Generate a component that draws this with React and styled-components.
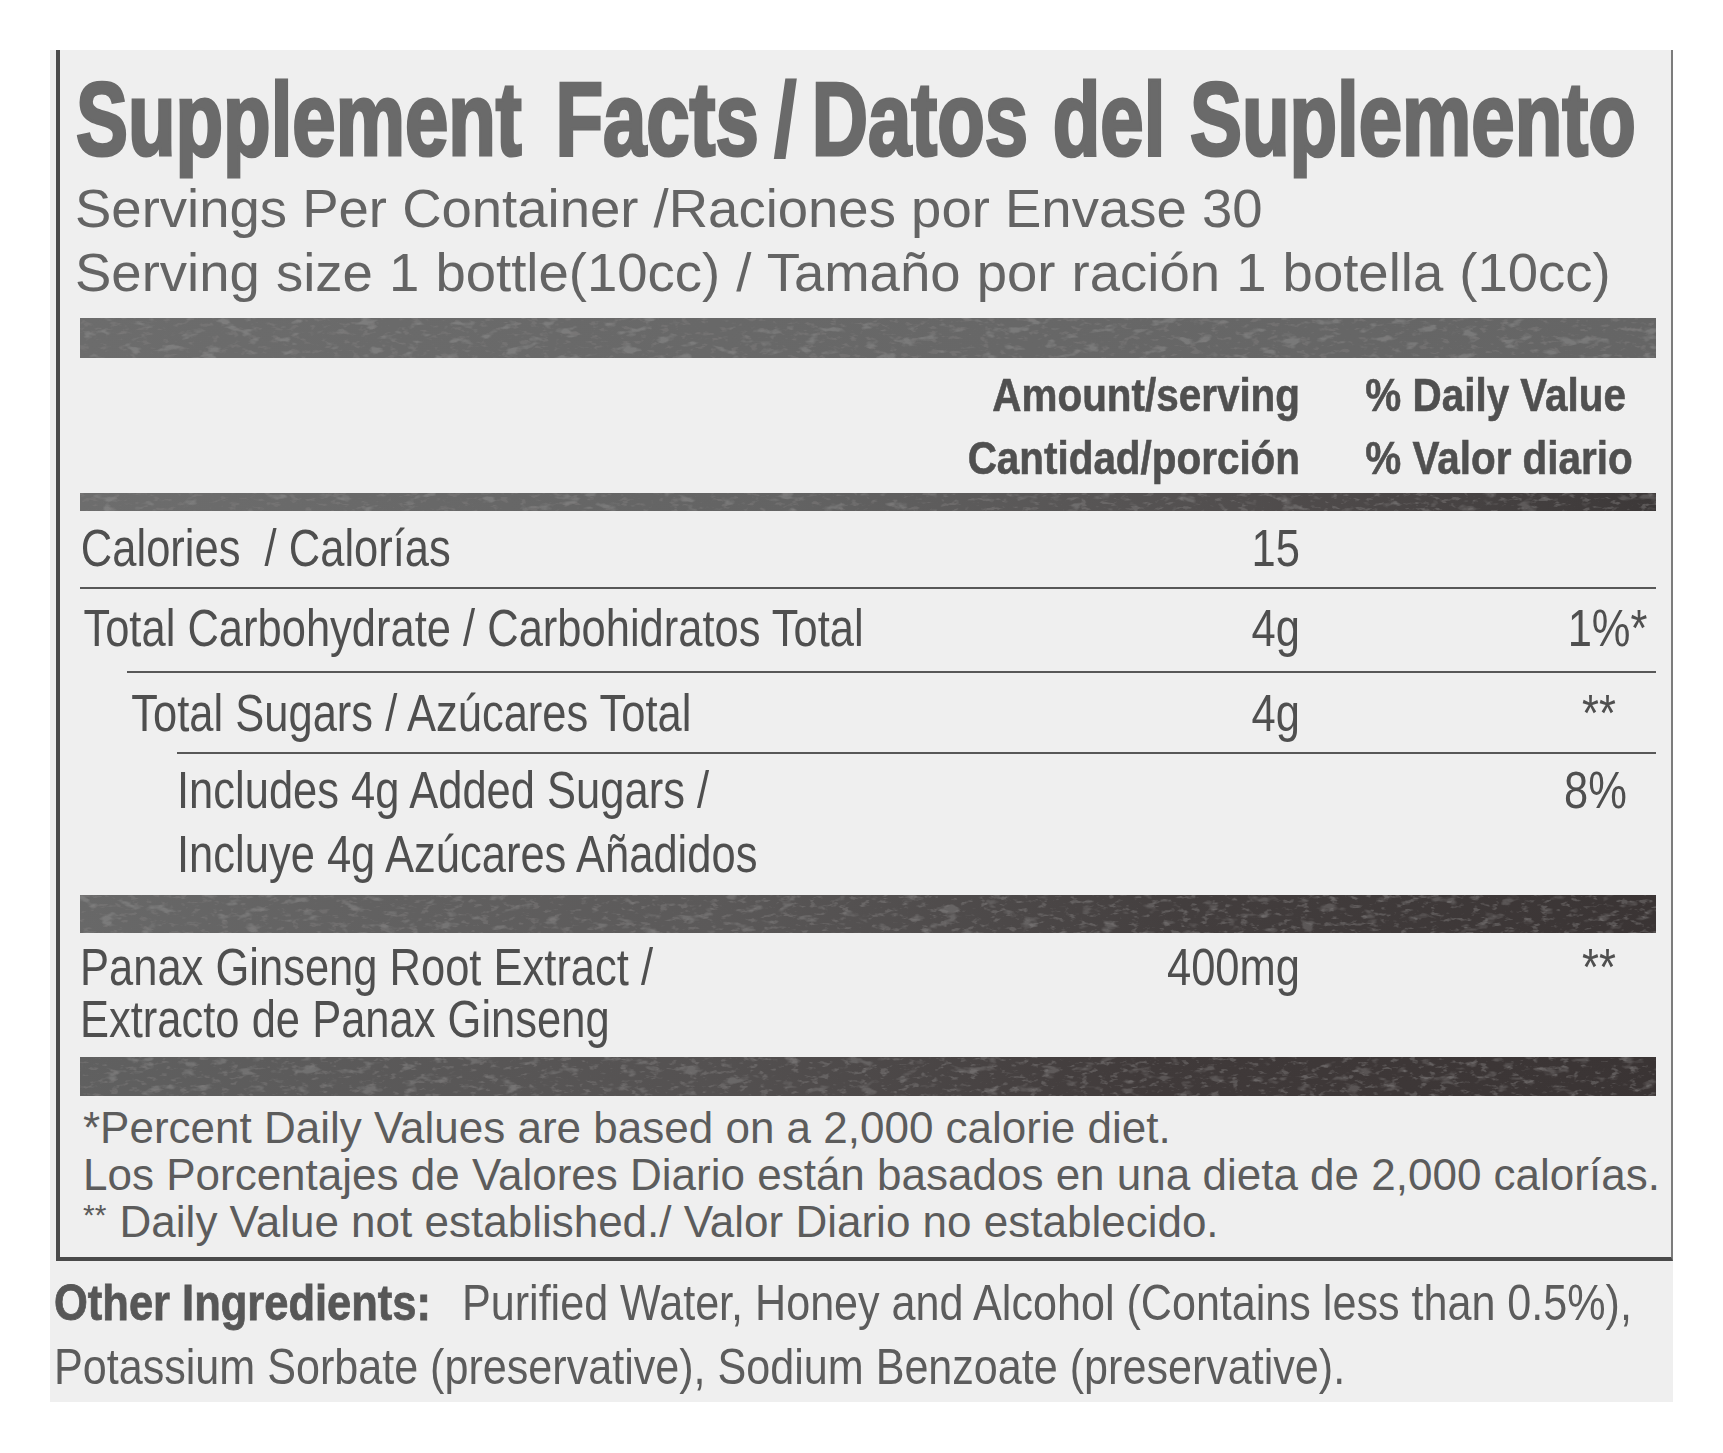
import React, { useId } from "react";
import styled, { createGlobalStyle } from "styled-components";

const GlobalStyle = createGlobalStyle`
  html, body {
    margin: 0;
    padding: 0;
    background: #ffffff;
    overflow: hidden;
  }
  body {
    font-family: "Liberation Sans", Arial, Helvetica, sans-serif;
  }
`;

const Page = styled.div`
  width: 1723px;
  height: 1453px;
  box-sizing: border-box;
  padding: 50px 0 0 50px;
  background: #ffffff;
`;

const Panel = styled.div`
  width: 1623px;
  height: 1352px;
  box-sizing: border-box;
  padding-left: 6px;
  background: #efefef;
  display: flex;
  flex-direction: column;
`;

const FactsBox = styled.section`
  display: flex;
  flex-direction: column;
  border-left: 4px solid #4b4b4b;
  border-right: 2px solid #7c7c7c;
  border-bottom: 4px solid #4a4a4a;
  padding: 17px 15px 12px 20px;
`;

const Title = styled.h1`
  margin: 0 0 6px -4px;
  font-family: "Liberation Sans", Arial, sans-serif;
  font-weight: 700;
  font-size: 104px;
  line-height: 104px;
  color: #6a6a6a;
  -webkit-text-stroke: 3.2px #6a6a6a;
  white-space: nowrap;
  word-spacing: 4px;
  transform: scaleX(0.749);
  transform-origin: left center;
`;

const TitleWord = styled.span`
  margin-right: ${(p) => p.$gap || 0}px;
`;

const ServingLine = styled.p`
  margin: 0 0 0 -5px;
  font-size: 54.5px;
  line-height: 64px;
  word-spacing: ${(p) => p.$ws || 0}px;
  color: #646464;
  white-space: pre;
`;

const gradients = {
  mid: "linear-gradient(90deg, #6c6c6c 0%, #686868 40%, #656565 100%)",
  fade: "linear-gradient(90deg, #6d6d6d 0%, #636363 45%, #4d4949 80%, #3c3838 100%)",
  dark: "linear-gradient(90deg, #686868 0%, #5b5959 40%, #433e3e 70%, #3a3434 100%)",
  dark2: "linear-gradient(90deg, #606060 0%, #545151 40%, #403a3a 68%, #3a3434 100%)",
};

const BarFrame = styled.div`
  position: relative;
  flex: none;
  height: ${(p) => p.$h}px;
  margin-top: ${(p) => p.$mt || 0}px;
  background: ${(p) => gradients[p.$tone]};
  overflow: hidden;
`;

const Grain = styled.svg`
  position: absolute;
  inset: 0;
  width: 100%;
  height: 100%;
  display: block;
`;

function Bar({ h, mt, tone, seed }) {
  const id = useId().replace(/[^a-zA-Z0-9_-]/g, "");
  return (
    <BarFrame $h={h} $mt={mt} $tone={tone}>
      <Grain preserveAspectRatio="none" aria-hidden="true">
        <defs>
          <filter id={`lt${id}`} x="0" y="0" width="1" height="1">
            <feTurbulence type="fractalNoise" baseFrequency="0.05 0.11" numOctaves="3" seed={seed + 7} />
            <feColorMatrix
              type="matrix"
              values="0 0 0 0 0.58  0 0 0 0 0.58  0 0 0 0 0.58  0 -6 0 0 2.4"
            />
          </filter>
          <filter id={`dk${id}`} x="0" y="0" width="1" height="1">
            <feTurbulence type="fractalNoise" baseFrequency="0.1 0.22" numOctaves="3" seed={seed} />
            <feColorMatrix
              type="matrix"
              values="0 0 0 0 0.22  0 0 0 0 0.21  0 0 0 0 0.21  6 0 0 0 -3.5"
            />
          </filter>
        </defs>
        <rect width="100%" height="100%" filter={`url(#lt${id})`} opacity="0.2" />
        <rect width="100%" height="100%" filter={`url(#dk${id})`} opacity="0.45" />
      </Grain>
    </BarFrame>
  );
}

const Columns = "minmax(0, 1fr) 420px 356px";

const HeaderGrid = styled.div`
  display: grid;
  grid-template-columns: ${Columns};
  margin-top: 5px;
  font-weight: 700;
  font-size: 47px;
  line-height: 63px;
  color: #505050;
  -webkit-text-stroke: 0.6px #505050;
`;

const HeadAmount = styled.div`
  white-space: nowrap;
  text-align: right;
  transform: scaleX(0.86);
  transform-origin: right center;
`;

const HeadDV = styled.div`
  white-space: nowrap;
  padding-left: 76px;
  transform: scaleX(0.86);
  transform-origin: left center;
`;

const Row = styled.div`
  display: grid;
  grid-template-columns: ${Columns};
  align-items: start;
  margin-left: ${(p) => p.$indent || 0}px;
  border-top: ${(p) => (p.$rule ? "2px solid #585858" : "0")};
  padding: ${(p) => p.$pad};
  font-size: 51px;
  line-height: ${(p) => p.$lh || 58}px;
  color: #4f4f4f;
`;

const Label = styled.div`
  white-space: pre;
  padding-left: ${(p) => p.$pl || 0}px;
  transform: scaleX(0.853);
  transform-origin: left center;
`;

const Amount = styled.div`
  white-space: nowrap;
  text-align: right;
  transform: scaleX(0.853);
  transform-origin: right center;
`;

const DV = styled.div`
  white-space: nowrap;
  text-align: right;
  padding-right: ${(p) => p.$pr || 0}px;
  transform: scaleX(0.853);
  transform-origin: right center;
`;

const Notes = styled.div`
  margin-top: 8px;
  padding-left: 3px;
  font-size: 44px;
  line-height: 47px;
  color: #5c5c5c;
`;

const NoteLine = styled.p`
  margin: 0;
  white-space: nowrap;
`;

const Stars = styled.span`
  font-size: 30px;
  line-height: 1;
  vertical-align: 12px;
  margin-right: 1px;
`;

const Ingredients = styled.div`
  margin: 10px 0 0 -2px;
  font-size: 50px;
  line-height: 64px;
  color: #5c5c5c;
`;

const IngLine = styled.div`
  display: flex;
`;

const IngLabel = styled.div`
  flex: none;
  width: 408px;
  white-space: nowrap;
  font-weight: 700;
  color: #575757;
  -webkit-text-stroke: 0.8px #575757;
  transform: scaleX(0.87);
  transform-origin: left center;
`;

const IngText = styled.div`
  white-space: nowrap;
  transform: scaleX(0.862);
  transform-origin: left center;
`;

export default function App() {
  return (
    <>
      <GlobalStyle />
      <Page>
        <Panel>
          <FactsBox>
            <Title>
              <TitleWord $gap={12}>Supplement</TitleWord> Facts{"\u2009/\u2009"}Datos del Suplemento
            </Title>
            <ServingLine>Servings Per Container /Raciones por Envase 30</ServingLine>
            <ServingLine $ws={1}>Serving size 1 bottle(10cc) / Tamaño por ración 1 botella (10cc)</ServingLine>

            <Bar h={40} mt={13} tone="mid" seed={3} />

            <HeaderGrid>
              <span />
              <HeadAmount>
                Amount/serving
                <br />
                Cantidad/porción
              </HeadAmount>
              <HeadDV>
                % Daily Value
                <br />
                % Valor diario
              </HeadDV>
            </HeaderGrid>

            <Bar h={18} mt={4} tone="fade" seed={11} />

            <Row $pad="9px 0 9px">
              <Label $pl={1}>Calories  / Calorías</Label>
              <Amount>15</Amount>
              <DV />
            </Row>
            <Row $rule $pad="11px 0 13px">
              <Label $pl={4}>Total Carbohydrate / Carbohidratos Total</Label>
              <Amount>4g</Amount>
              <DV $pr={10}>1%*</DV>
            </Row>
            <Row $rule $indent={47} $pad="12px 0 9px">
              <Label $pl={5}>Total Sugars / Azúcares Total</Label>
              <Amount>4g</Amount>
              <DV $pr={47}>**</DV>
            </Row>
            <Row $rule $indent={97} $pad="5px 0 8px" $lh={64}>
              <Label>
                Includes 4g Added Sugars /
                <br />
                Incluye 4g Azúcares Añadidos
              </Label>
              <Amount />
              <DV $pr={34}>8%</DV>
            </Row>

            <Bar h={38} tone="dark" seed={5} />

            <Row $pad="9px 0 11px" $lh={52}>
              <Label>
                Panax Ginseng Root Extract /
                <br />
                Extracto de Panax Ginseng
              </Label>
              <Amount>400mg</Amount>
              <DV $pr={47}>**</DV>
            </Row>

            <Bar h={39} tone="dark2" seed={9} />

            <Notes>
              <NoteLine>*Percent Daily Values are based on a 2,000 calorie diet.</NoteLine>
              <NoteLine>Los Porcentajes de Valores Diario están basados en una dieta de 2,000 calorías.</NoteLine>
              <NoteLine>
                <Stars>**</Stars> Daily Value not established./ Valor Diario no establecido.
              </NoteLine>
            </Notes>
          </FactsBox>

          <Ingredients>
            <IngLine>
              <IngLabel>Other Ingredients:</IngLabel>
              <IngText>Purified Water, Honey and Alcohol (Contains less than 0.5%),</IngText>
            </IngLine>
            <IngLine>
              <IngText>Potassium Sorbate (preservative), Sodium Benzoate (preservative).</IngText>
            </IngLine>
          </Ingredients>
        </Panel>
      </Page>
    </>
  );
}
